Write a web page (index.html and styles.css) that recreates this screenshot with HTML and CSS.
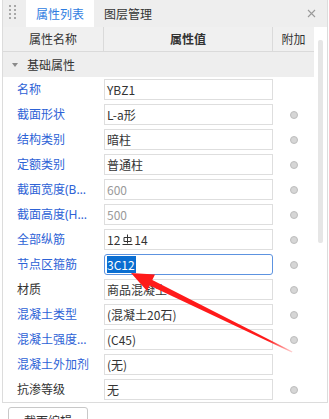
FILE: index.html
```html
<!DOCTYPE html>
<html lang="zh-CN">
<head>
  <meta charset="UTF-8">
  <title>属性列表</title>
  <link rel="stylesheet" href="styles.css">
</head>
<body>
  <div class="panel">
    <div class="tabs">
      <div class="handle">
        <i></i><i></i><i></i><i></i><i></i><i></i><i></i><i></i>
      </div>
      <div class="tab active">属性列表</div>
      <div class="tab">图层管理</div>
      <svg class="close" width="9" height="9" viewBox="0 0 9 9">
        <path d="M1 1 L8 8 M8 1 L1 8" stroke="#9a9a9a" stroke-width="1.1" fill="none"/>
      </svg>
    </div>

    <div class="content">
      <div class="grid">
        <div class="head">
          <div class="hcell">属性名称</div>
          <div class="hcell bold">属性值</div>
          <div class="hcell">附加</div>
        </div>
        <div class="group"><span class="caret"></span>基础属性</div>

        <div class="row">
          <div class="name">名称</div>
          <div class="cell"><div class="val">YBZ1</div></div>
          <div class="extra"></div>
        </div>
        <div class="row">
          <div class="name">截面形状</div>
          <div class="cell"><div class="val">L-a形</div></div>
          <div class="extra"><span class="dot"></span></div>
        </div>
        <div class="row">
          <div class="name">结构类别</div>
          <div class="cell"><div class="val">暗柱</div></div>
          <div class="extra"><span class="dot"></span></div>
        </div>
        <div class="row">
          <div class="name">定额类别</div>
          <div class="cell"><div class="val">普通柱</div></div>
          <div class="extra"><span class="dot"></span></div>
        </div>
        <div class="row">
          <div class="name">截面宽度(B边)(mm)</div>
          <div class="cell"><div class="val muted">600</div></div>
          <div class="extra"><span class="dot"></span></div>
        </div>
        <div class="row">
          <div class="name">截面高度(H边)(mm)</div>
          <div class="cell"><div class="val muted">500</div></div>
          <div class="extra"><span class="dot"></span></div>
        </div>
        <div class="row">
          <div class="name">全部纵筋</div>
          <div class="cell"><div class="val">12<svg class="rebar" width="11" height="12" viewBox="0 0 11 12"><path d="M5.5 0.5 V9.5 M2 3.5 H9 V7.5 H2 Z M0.5 10.5 H10.5" stroke="#333" stroke-width="1" fill="none"/></svg>14</div></div>
          <div class="extra"><span class="dot"></span></div>
        </div>
        <div class="row">
          <div class="name">节点区箍筋</div>
          <div class="cell"><div class="val focus"><span class="sel">3C12</span></div></div>
          <div class="extra"><span class="dot"></span></div>
        </div>
        <div class="row">
          <div class="name plain">材质</div>
          <div class="cell"><div class="val">商品混凝土</div></div>
          <div class="extra"><span class="dot"></span></div>
        </div>
        <div class="row">
          <div class="name">混凝土类型</div>
          <div class="cell"><div class="val">(混凝土20石)</div></div>
          <div class="extra"><span class="dot"></span></div>
        </div>
        <div class="row">
          <div class="name">混凝土强度等级</div>
          <div class="cell"><div class="val">(C45)</div></div>
          <div class="extra"><span class="dot"></span></div>
        </div>
        <div class="row">
          <div class="name">混凝土外加剂</div>
          <div class="cell"><div class="val">(无)</div></div>
          <div class="extra"></div>
        </div>
        <div class="row">
          <div class="name plain">抗渗等级</div>
          <div class="cell"><div class="val">无</div></div>
          <div class="extra"><span class="dot"></span></div>
        </div>
      </div>
      <div class="scroll"><div class="thumb"></div></div>
    </div>
  </div>

  <button class="btn">截面编辑</button>

  <!-- annotation arrow drawn over the panel -->
  <svg class="arrow" width="329" height="419" viewBox="0 0 329 419">
    <defs>
      <linearGradient id="fade" gradientUnits="userSpaceOnUse" x1="131" y1="273" x2="292" y2="352">
        <stop offset="0" stop-color="#ff1a1a"/>
        <stop offset="0.85" stop-color="#ff1a1a"/>
        <stop offset="1" stop-color="#ff1a1a" stop-opacity="0.2"/>
      </linearGradient>
    </defs>
    <polygon fill="url(#fade)" points="131,273 155,274.5 152.3,280 292.5,351.5 291.8,352.6 149.6,285.6 147,291"/>
  </svg>
</body>
</html>
```

FILE: styles.css
```css
body { margin: 0; background: #fff; font-family: "Noto Sans CJK SC", "Noto Sans", sans-serif; font-size: 12px; color: #333; position: relative; }

.panel { margin-left: 2px; width: 324px; border: 1px solid #dcdcdc; border-top: none; }

.tabs { display: flex; align-items: stretch; height: 27px; background: #eeeeee; }
.handle { display: grid; grid-template-columns: 2px 2px; grid-auto-rows: 2px; column-gap: 3px; row-gap: 2px; padding: 5px 0 0 6px; width: 17px; box-sizing: border-box; }
.handle i { display: block; width: 2px; height: 2px; background: #a8a8a8; }
.tab { padding: 0 10px; line-height: 27px; font-size: 12px; color: #333; }
.tab.active { background: #fff; color: #2f7de1; margin-left: 6px; }
.close { margin: 9px 11px 0 auto; }

.content { display: flex; }
.grid { width: 311px; }
.scroll { flex: 1; }
.thumb { width: 5px; height: 203px; margin: 13px 0 0 4px; background: #e6e6e6; border-radius: 2px; }

.head { display: grid; grid-template-columns: 101px 169px 41px; height: 24px; background: #f0f0f0; border-bottom: 1px solid #dadada; }
.hcell { text-align: center; line-height: 24px; color: #333; border-right: 1px solid #dadada; }
.hcell:last-child { border-right: none; }
.hcell.bold { font-weight: bold; }

.group { height: 25px; line-height: 25px; background: #eeeeee; padding-left: 9px; color: #333; display: flex; align-items: center; }
.caret { width: 0; height: 0; border-left: 3px solid transparent; border-right: 3px solid transparent; border-top: 4px solid #8a8a8a; margin-right: 9px; }

.row { display: grid; grid-template-columns: 101px 169px 41px; height: 25px; align-items: center; }
/* Latin font first so the ellipsis sits on the baseline */
.name { padding-left: 14px; padding-right: 12px; color: #2d62d6; font-family: "Noto Sans", "Noto Sans CJK SC", sans-serif; white-space: nowrap; overflow: hidden; text-overflow: ellipsis; line-height: 25px; }
.name.plain { color: #333; }
.cell { padding: 2px 0; }
.val { height: 19px; line-height: 19px; border: 1px solid #dedede; padding-left: 2px; white-space: nowrap; overflow: hidden; color: #333; display: flex; align-items: center; }
.val.muted { color: #9a9a9a; }
.val.focus { border-color: #5d93e0; border-radius: 3px; }
.sel { background: #0a6ed1; color: #fff; line-height: 17px; padding-right: 1px; }
.rebar { margin: 0 1px 0 2px; }
.extra { display: flex; justify-content: center; align-items: center; }
.dot { width: 6px; height: 6px; border-radius: 50%; background: #d6d6d6; border: 1px solid #bdbdbd; }

.btn { margin: 4px 0 0 8px; width: 80px; height: 26px; background: #fff; border: 1px solid #c8c8c8; border-radius: 3px; font-family: inherit; font-size: 12px; color: #333; padding: 0; }

.arrow { position: absolute; left: 0; top: 0; pointer-events: none; }
```
